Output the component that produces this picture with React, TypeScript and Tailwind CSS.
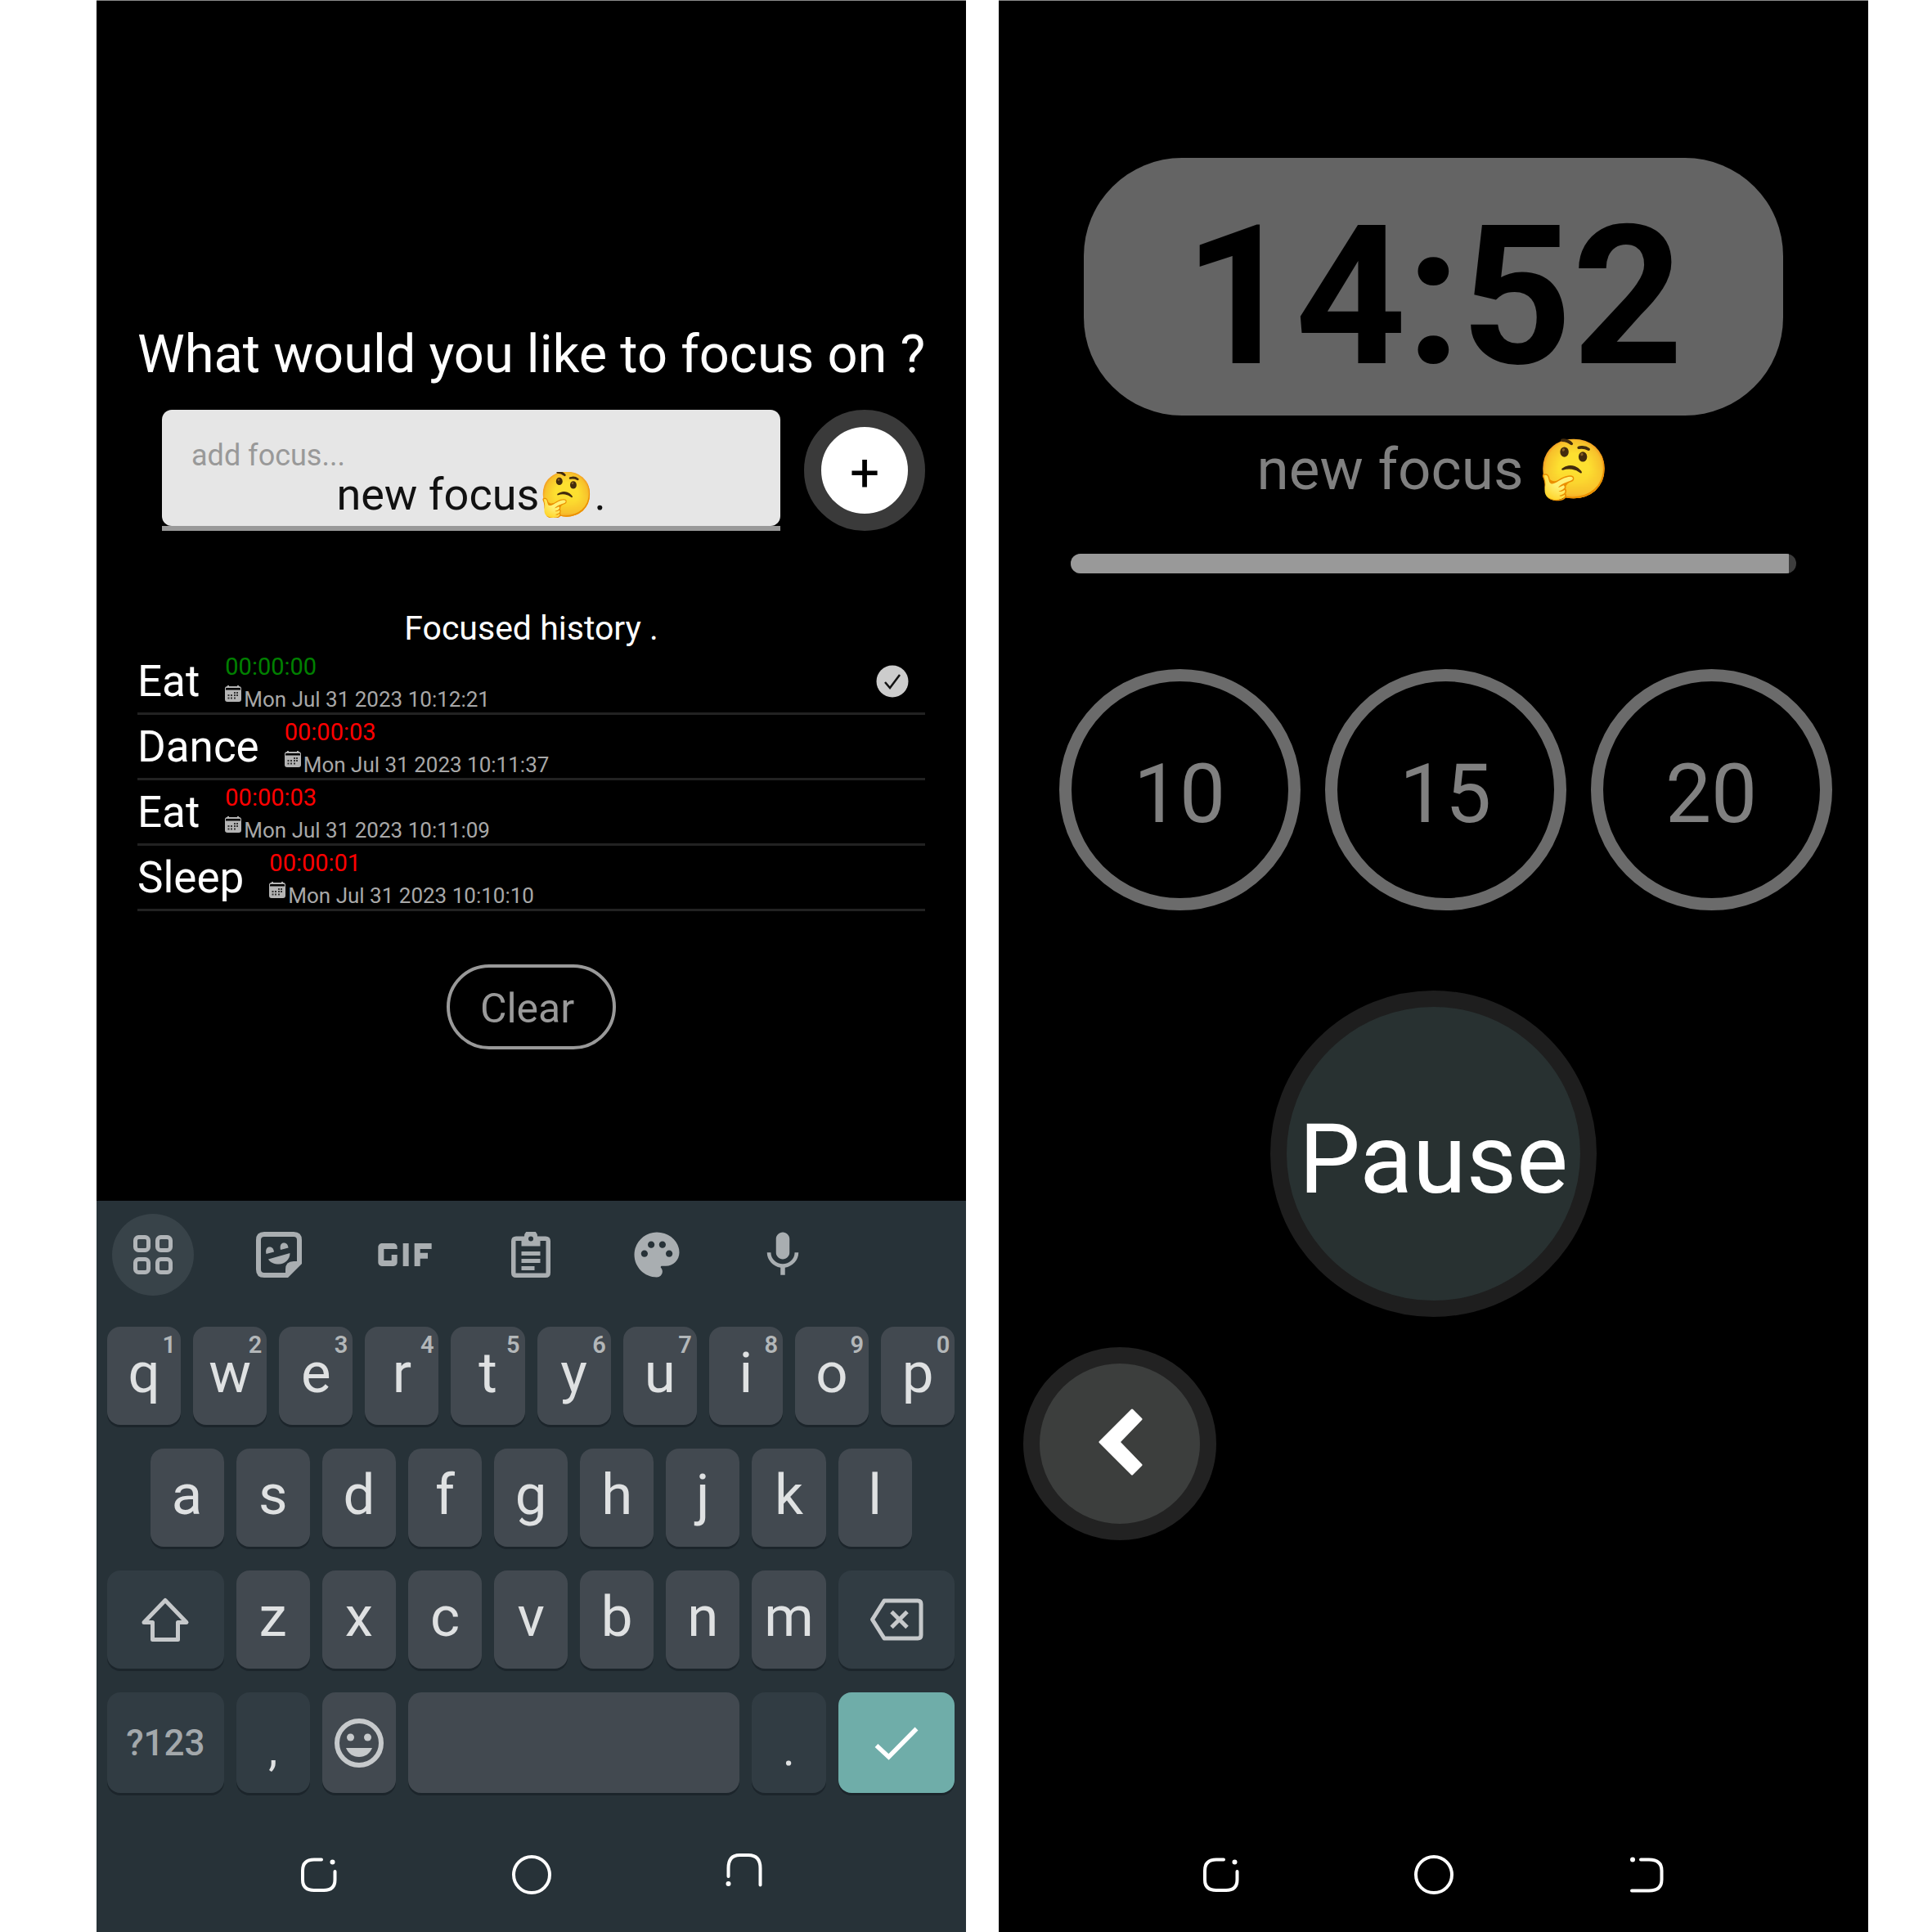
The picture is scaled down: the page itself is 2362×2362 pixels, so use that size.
import type { ReactNode } from "react";
import { MdGif, MdMic, MdPalette } from "react-icons/md";

type Session = { name: string; time: string; date: string; done: boolean };

const history: Session[] = [
  { name: "Eat", time: "00:00:00", date: "Mon Jul 31 2023 10:12:21", done: true },
  { name: "Dance", time: "00:00:03", date: "Mon Jul 31 2023 10:11:37", done: false },
  { name: "Eat", time: "00:00:03", date: "Mon Jul 31 2023 10:11:09", done: false },
  { name: "Sleep", time: "00:00:01", date: "Mon Jul 31 2023 10:10:10", done: false },
];

function CalendarIcon() {
  return (
    <svg viewBox="0 0 20 20" className="mt-1 size-5 shrink-0" aria-hidden="true">
      <path
        fill="#b4b4b4"
        fillRule="evenodd"
        d="M3 1V0h2v1h10V0h2v1a3 3 0 0 1 3 2v14a3 3 0 0 1-3 3H3a3 3 0 0 1-3-3V3a3 3 0 0 1 3-2ZM1 4v1.500h18V4a1 1 0 0 0-1-1H2a1 1 0 0 0-1 1Z"
      />
      <path
        fill="#333"
        d="M11 8h2v2h-2zM14 8h2v2h-2zM3.500 11h2v2h-2zM7 11h2v2H7zM11 11h2v2h-2zM14 11h2v2h-2zM3.500 14.500h2v2h-2zM7 14.500h2v2H7zM11 14.500h2v2h-2z"
      />
    </svg>
  );
}

function CheckCircle() {
  return (
    <svg viewBox="0 0 40 40" className="mr-5 ml-auto size-10 self-center" role="img" aria-label="Completed">
      <circle cx="20" cy="20" r="19.500" fill="#ccc" />
      <path d="M11 21l6 7 12-16" fill="none" stroke="#111" strokeWidth="2.500" />
    </svg>
  );
}

function GridIcon() {
  return (
    <svg viewBox="0 0 48 48" className="size-12" fill="none" stroke="currentColor" strokeWidth="5">
      <rect x="2.500" y="2.500" width="16" height="16" rx="4" />
      <rect x="29.500" y="2.500" width="16" height="16" rx="4" />
      <rect x="2.500" y="29.500" width="16" height="16" rx="4" />
      <rect x="29.500" y="29.500" width="16" height="16" rx="4" />
    </svg>
  );
}

function StickerIcon() {
  return (
    <svg viewBox="0 0 56 56" className="size-14" fill="currentColor">
      <path
        fillRule="evenodd"
        d="M10 0H46Q56 0 56 10V39L39 56H10Q0 56 0 46V10Q0 0 10 0ZM10 6Q6 6 6 10V46Q6 50 10 50H36V46Q36 36 46 36H50V10Q50 6 46 6Z"
      />
      <path d="M12.500 27C11 21 14 18.500 16.500 18.500S21.500 20 22 24.500Z" />
      <path d="M30 22C28.500 16 31.500 13.500 34 13.500S39 15 39.500 19.500Z" />
      <path d="M15 33.500L41.500 26C41.500 34 35 39.500 28 39.500C22 39.500 17.500 37.500 15 33.500Z" />
    </svg>
  );
}

function ClipboardIcon() {
  return (
    <svg viewBox="0 0 48 56" className="h-14 w-12" fill="currentColor">
      <path
        fillRule="evenodd"
        d="M6 5.500H16A8 8 0 0 1 32 5.500H42Q48 5.500 48 11.500V50Q48 56 42 56H6Q0 56 0 50V11.500Q0 5.500 6 5.500ZM5.500 11V50.500H42.500V11H35.500V17.500H12.500V11ZM24 5.500A3 3 0 1 0 24 11.500A3 3 0 1 0 24 5.500Z"
      />
      <path d="M12.500 24h23v5h-23zM12.500 33h23v5h-23zM12.500 42h16v5h-16z" />
    </svg>
  );
}

function ShiftIcon() {
  return (
    <svg viewBox="0 0 60 56" className="h-14 w-[60px]" fill="none" stroke="#c6c9cb" strokeWidth="5" strokeLinejoin="round">
      <path d="M30 4.500L56 31.500H45.500V52.500H14.500V31.500H4Z" />
    </svg>
  );
}

function BackspaceIcon() {
  return (
    <svg viewBox="0 0 66 52" className="h-[52px] w-[66px]" fill="none" stroke="#c6c9cb" strokeWidth="5" strokeLinejoin="round">
      <path d="M18 3H59Q63 3 63 7V45Q63 49 59 49H18L3.500 26Z" />
      <path d="M27 16.500L46 35.500M46 16.500L27 35.500" />
    </svg>
  );
}

function SmileIcon() {
  return (
    <svg viewBox="0 0 60 60" className="size-[60px]" fill="#c6c9cb">
      <circle cx="30" cy="30" r="27" fill="none" stroke="#c6c9cb" strokeWidth="6" />
      <circle cx="19.500" cy="23" r="4.500" />
      <circle cx="40.500" cy="23" r="4.500" />
      <path d="M14 36H46C43 43 37.500 47 30 47S17 43 14 36Z" />
    </svg>
  );
}

function EnterIcon() {
  return (
    <svg viewBox="0 0 54 42" className="h-[42px] w-[54px]" fill="none" stroke="#fff" strokeWidth="5.500">
      <path d="M2.500 24L17.500 38L51.500 3.500" />
    </svg>
  );
}

function NavBar({ raised }: { raised?: boolean }) {
  return (
    <nav className="mt-auto flex h-[140px] items-center justify-center gap-[212px] text-white">
      <button aria-label="Recent apps">
        <svg viewBox="0 0 48 48" className="size-12" fill="none" stroke="currentColor" strokeWidth="4" strokeLinecap="round">
          <path d="M27 5.500H18Q4 5.500 4 19V30Q4 43 18 43H30Q43.500 43 43.500 30V20" />
          <circle cx="40.500" cy="8.500" r="3" fill="currentColor" stroke="none" />
        </svg>
      </button>
      <button aria-label="Home">
        <svg viewBox="0 0 48 48" className="size-12" fill="none" stroke="currentColor" strokeWidth="4">
          <circle cx="24" cy="24" r="22" />
        </svg>
      </button>
      <button aria-label="Back">
        {raised ? (
          <svg viewBox="0 0 48 48" className="size-12 overflow-visible" fill="none" stroke="currentColor" strokeWidth="4" strokeLinecap="round">
            <path d="M4.500 26V16Q4.500 0 18 0H29Q43.500 0 43.500 16V36.500" />
            <circle cx="4.500" cy="35" r="3" fill="currentColor" stroke="none" />
          </svg>
        ) : (
          <svg viewBox="0 0 48 48" className="size-12" fill="none" stroke="currentColor" strokeWidth="4" strokeLinecap="round">
            <path d="M17 5.500H27Q42.500 5.500 42.500 19V30Q42.500 43.500 27 43.500H6" />
            <circle cx="7" cy="5.500" r="3" fill="currentColor" stroke="none" />
          </svg>
        )}
      </button>
    </nav>
  );
}

function LetterKey({ letter, hint, className = "" }: { letter: string; hint?: string; className?: string }) {
  return (
    <button
      className={`relative col-span-2 flex h-[120px] items-center justify-center rounded-2xl bg-[#424950] pb-1.5 text-[69px] leading-[80px] text-[#dfe1e2] shadow-[0_3px_0_#1c252b] ${className}`}
    >
      {letter}
      {hint && (
        <span className="absolute top-1.5 right-1.5 text-[29px] leading-8 font-semibold text-[#b3b7b9]">{hint}</span>
      )}
    </button>
  );
}

function FunctionKey({ label, className, children }: { label?: string; className: string; children?: ReactNode }) {
  return (
    <button
      aria-label={label}
      className={`flex items-center justify-center rounded-2xl shadow-[0_3px_0_#1c252b] ${className}`}
    >
      {children}
    </button>
  );
}

function Keyboard() {
  return (
    <section aria-label="Keyboard" className="flex flex-col bg-[#273238]">
      <div className="flex h-[131px] items-center gap-[54px] pl-[19px] text-[#a9aeb1]">
        <button aria-label="Menu" className="flex size-[100px] items-center justify-center rounded-full bg-[#384349] text-[#b1b5b8]">
          <GridIcon />
        </button>
        <button aria-label="Stickers" className="flex w-[100px] justify-center"><StickerIcon /></button>
        <button aria-label="GIF" className="flex w-[100px] justify-center"><MdGif className="size-[112px] shrink-0" /></button>
        <button aria-label="Clipboard" className="flex w-[100px] justify-center"><ClipboardIcon /></button>
        <button aria-label="Themes" className="flex w-[100px] justify-center"><MdPalette className="size-[66px]" /></button>
        <button aria-label="Voice input" className="flex w-[100px] justify-center"><MdMic className="size-[66px]" /></button>
      </div>
      <div className="grid grid-cols-20 gap-x-[15px] gap-y-[29px] pt-[23px] pr-3.5 pl-[13px]">
        {"qwertyuiop".split("").map((letter, i) => (
          <LetterKey key={letter} letter={letter} hint={String((i + 1) % 10)} />
        ))}
        {"asdfghjkl".split("").map((letter, i) => (
          <LetterKey key={letter} letter={letter} className={i === 0 ? "col-start-2" : ""} />
        ))}
        <FunctionKey label="Shift" className="col-span-3 col-start-1 h-[120px] bg-[#313c43]"><ShiftIcon /></FunctionKey>
        {"zxcvbnm".split("").map((letter) => (
          <LetterKey key={letter} letter={letter} />
        ))}
        <FunctionKey label="Backspace" className="col-span-3 h-[120px] bg-[#313c43]"><BackspaceIcon /></FunctionKey>
        <FunctionKey className="col-span-3 h-[123px] bg-[#313c43] text-[44px] font-medium text-[#a3a8ab]">?123</FunctionKey>
        <FunctionKey className="col-span-2 h-[123px] bg-[#313c43] pt-4 text-[56px] text-[#dfe1e2]">,</FunctionKey>
        <FunctionKey label="Emoji" className="col-span-2 h-[123px] bg-[#424950]"><SmileIcon /></FunctionKey>
        <FunctionKey label="Space" className="col-span-8 h-[123px] bg-[#424950]" />
        <FunctionKey className="col-span-2 h-[123px] bg-[#313c43] pt-4 text-[56px] text-[#dfe1e2]">.</FunctionKey>
        <FunctionKey label="Enter" className="col-span-3 h-[123px] bg-[#6fada9]"><EnterIcon /></FunctionKey>
      </div>
      <div className="pt-[30px]">
        <NavBar raised />
      </div>
    </section>
  );
}

function FocusScreen() {
  return (
    <main className="flex flex-1 flex-col border-t border-[#8a8a8a] bg-black">
      <div className="flex flex-1 flex-col px-[50px] pt-[392px]">
        <h1 className="text-center text-[65px] leading-[80px] whitespace-nowrap text-white">What would you like to focus on ?</h1>
        <form className="mt-7 flex gap-[29px] pl-[30px]" onSubmit={(e) => e.preventDefault()}>
          <div className="flex-1">
            <div className="flex h-[142px] flex-col rounded-xl bg-[#e6e6e6] px-9 pt-9">
              <label htmlFor="focus" className="text-[36px] leading-10 text-[#999]">add focus...</label>
              <input
                id="focus"
                defaultValue="new focus🤔."
                className="h-14 w-full bg-transparent text-center text-[54px] leading-[56px] text-[#111] outline-none"
              />
            </div>
            <div className="h-1.5 bg-[#999]" />
          </div>
          <button
            aria-label="Add focus"
            className="flex size-[148px] items-center justify-center rounded-full border-[21px] border-[#3a3a3a] bg-white pt-2 text-[64px] leading-[80px] text-black"
          >
            +
          </button>
        </form>
        <h2 className="mt-[94px] text-center text-[41px] leading-[50px] text-white">Focused history .</h2>
        <ul className="mt-px">
          {history.map((item) => (
            <li key={item.date} className="flex h-20 gap-[31px] border-b-[3px] border-[#222]">
              <span className="self-center text-[53px] leading-[62px] text-white">{item.name}</span>
              <div className="pt-0.5">
                <div className={item.done ? "text-[29px] leading-[38px] text-[#008000]" : "text-[29px] leading-[38px] text-[#f00]"}>
                  {item.time}
                </div>
                <div className="flex gap-[3px] text-[26px] leading-[42px] text-[#a8a8a8]">
                  <CalendarIcon />
                  {item.date}
                </div>
              </div>
              {item.done && <CheckCircle />}
            </li>
          ))}
        </ul>
        <button className="mt-[65px] h-[104px] w-[207px] self-center rounded-full border-4 border-[#999] pt-1 pr-2.5 text-[50px] text-[#999]">
          Clear
        </button>
      </div>
      <Keyboard />
    </main>
  );
}

function TimerScreen() {
  return (
    <main className="flex flex-1 flex-col border-t border-[#8a8a8a] bg-black pt-[192px]">
      <div className="mx-[104px] flex h-[315px] items-center justify-center rounded-[120px] bg-[#646464] pt-6 text-[237px] leading-[280px] font-bold text-black">
        14:52
      </div>
      <p className="mt-[22px] text-center text-[71px] leading-[88px] text-[#808080]">
        new focus <span className="text-white">🤔</span>
      </p>
      <div
        role="progressbar"
        aria-label="Time left"
        aria-valuenow={99}
        className="mx-[88px] mt-[59px] h-6 overflow-hidden rounded-xl bg-[#3d3d3d]"
      >
        <div className="h-full bg-[#999]" style={{ width: "99%" }} />
      </div>
      <div className="mt-[117px] flex justify-center gap-[30px] pl-[29px]">
        {[10, 15, 20].map((minutes) => (
          <button
            key={minutes}
            className="size-[295px] rounded-full border-[15px] border-[#6b6b6b] pt-2.5 text-[100px] leading-[120px] text-[#808080]"
          >
            {minutes}
          </button>
        ))}
      </div>
      <button className="mt-[98px] flex size-[399px] items-center justify-center self-center rounded-full border-[20px] border-[#1e1e1e] bg-[#283131] pt-3.5 text-[119px] leading-[140px] text-white">
        Pause
      </button>
      <button
        aria-label="Go back"
        className="mt-[37px] ml-[30px] flex size-[236px] items-center justify-center rounded-full border-[20px] border-[#222] bg-[#3c3e3d]"
      >
        <svg viewBox="0 0 56 84" className="mb-1 h-[84px] w-14">
          <path
            d="M4 42L43 3L54 14L27 42L54 70L43 81Z"
            fill="#fff"
            stroke="#fff"
            strokeWidth="3"
            strokeLinejoin="round"
          />
        </svg>
      </button>
      <NavBar />
    </main>
  );
}

export default function App() {
  return (
    <div className="flex min-h-screen gap-10 bg-white pr-[78px] pl-[118px] font-['Roboto','Noto_Color_Emoji',sans-serif]">
      <FocusScreen />
      <TimerScreen />
    </div>
  );
}
